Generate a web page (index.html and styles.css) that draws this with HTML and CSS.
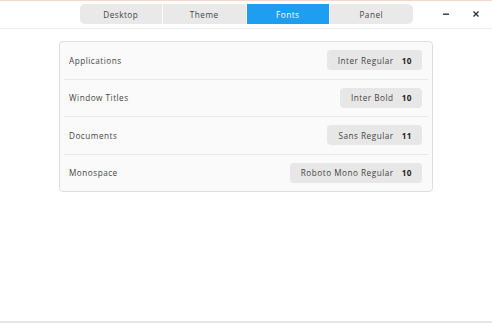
FILE: index.html
```html
<!DOCTYPE html>
<html>
<head>
<meta charset="utf-8">
<link rel="stylesheet" href="styles.css">
</head>
<body>
<div class="window">
  <header class="header">
    <div class="spacer"></div>
    <nav class="tabs">
      <div class="tab">Desktop</div>
      <div class="tab">Theme</div>
      <div class="tab active">Fonts</div>
      <div class="tab">Panel</div>
    </nav>
    <div class="controls">
      <span class="ctl minimize"><svg width="8" height="8" viewBox="0 0 8 8"><rect x="1" y="3.5" width="6" height="1.4" fill="#333"/></svg></span>
      <span class="ctl close"><svg width="8" height="8" viewBox="0 0 8 8"><path d="M1.5 1.5 L6.5 6.5 M6.5 1.5 L1.5 6.5" stroke="#333" stroke-width="1.4"/></svg></span>
    </div>
  </header>
  <main class="content">
    <section class="card">
      <div class="row">
        <span class="label">Applications</span>
        <button class="font-btn">Inter Regular <b>10</b></button>
      </div>
      <div class="row">
        <span class="label">Window Titles</span>
        <button class="font-btn">Inter Bold <b>10</b></button>
      </div>
      <div class="row">
        <span class="label">Documents</span>
        <button class="font-btn">Sans Regular <b>11</b></button>
      </div>
      <div class="row">
        <span class="label">Monospace</span>
        <button class="font-btn">Roboto Mono Regular <b>10</b></button>
      </div>
    </section>
  </main>
</div>
</body>
</html>
```

FILE: styles.css
```css
* { box-sizing: border-box; }
html, body {
  margin: 0;
  padding: 0;
  width: 492px;
  height: 323px;
  background: #ffffff;
  font-family: "Open Sans", "Liberation Sans", sans-serif;
  overflow: hidden;
}
.window {
  width: 492px;
  height: 323px;
  border-top: 1px solid #f4d8cb;
  border-bottom: 2px solid #e6e6e6;
  display: flex;
  flex-direction: column;
}
.header {
  height: 28px;
  flex: none;
  display: grid;
  grid-template-columns: 1fr auto 1fr;
  align-items: center;
  border-bottom: 1px solid #ececec;
  padding-bottom: 1px;
}
.tabs {
  display: flex;
  gap: 1px;
  background: #fafafa;
  border-radius: 5px;
  overflow: hidden;
  height: 20px;
}
.tab {
  width: 82.5px;
  height: 20px;
  background: #e9e9e9;
  color: #444;
  font-size: 8.2px;
  letter-spacing: 0.5px;
  display: flex;
  align-items: center;
  justify-content: center;
}
.tab.active {
  background: #1d9ef0;
  color: #ffffff;
}
.controls {
  display: flex;
  justify-content: flex-end;
  align-items: center;
  gap: 22px;
  padding-right: 12px;
}
.ctl {
  width: 8px;
  height: 8px;
  display: flex;
}
.content {
  flex: 1;
  display: flex;
  justify-content: center;
  padding-top: 12px;
}
.card {
  width: 374px;
  height: 151px;
  border: 1px solid #dedede;
  border-radius: 4px;
  background: #fafafa;
  display: flex;
  flex-direction: column;
  padding: 0 4px;
}
.row {
  flex: 1;
  display: flex;
  align-items: center;
  justify-content: space-between;
  padding: 0 6px 0 5px;
  border-bottom: 1px solid #e8e8e8;
}
.row:last-child { border-bottom: none; }
.label {
  font-size: 8.2px;
  color: #454545;
  letter-spacing: 0.5px;
}
.font-btn {
  border: none;
  background: #e7e7e7;
  border-radius: 4px;
  height: 20px;
  padding: 0 10px 0 11px;
  font-family: inherit;
  font-size: 8.2px;
  color: #444;
  letter-spacing: 0.5px;
  display: flex;
  align-items: center;
  gap: 8px;
}
.font-btn b {
  font-weight: 700;
  color: #222;
}
```
